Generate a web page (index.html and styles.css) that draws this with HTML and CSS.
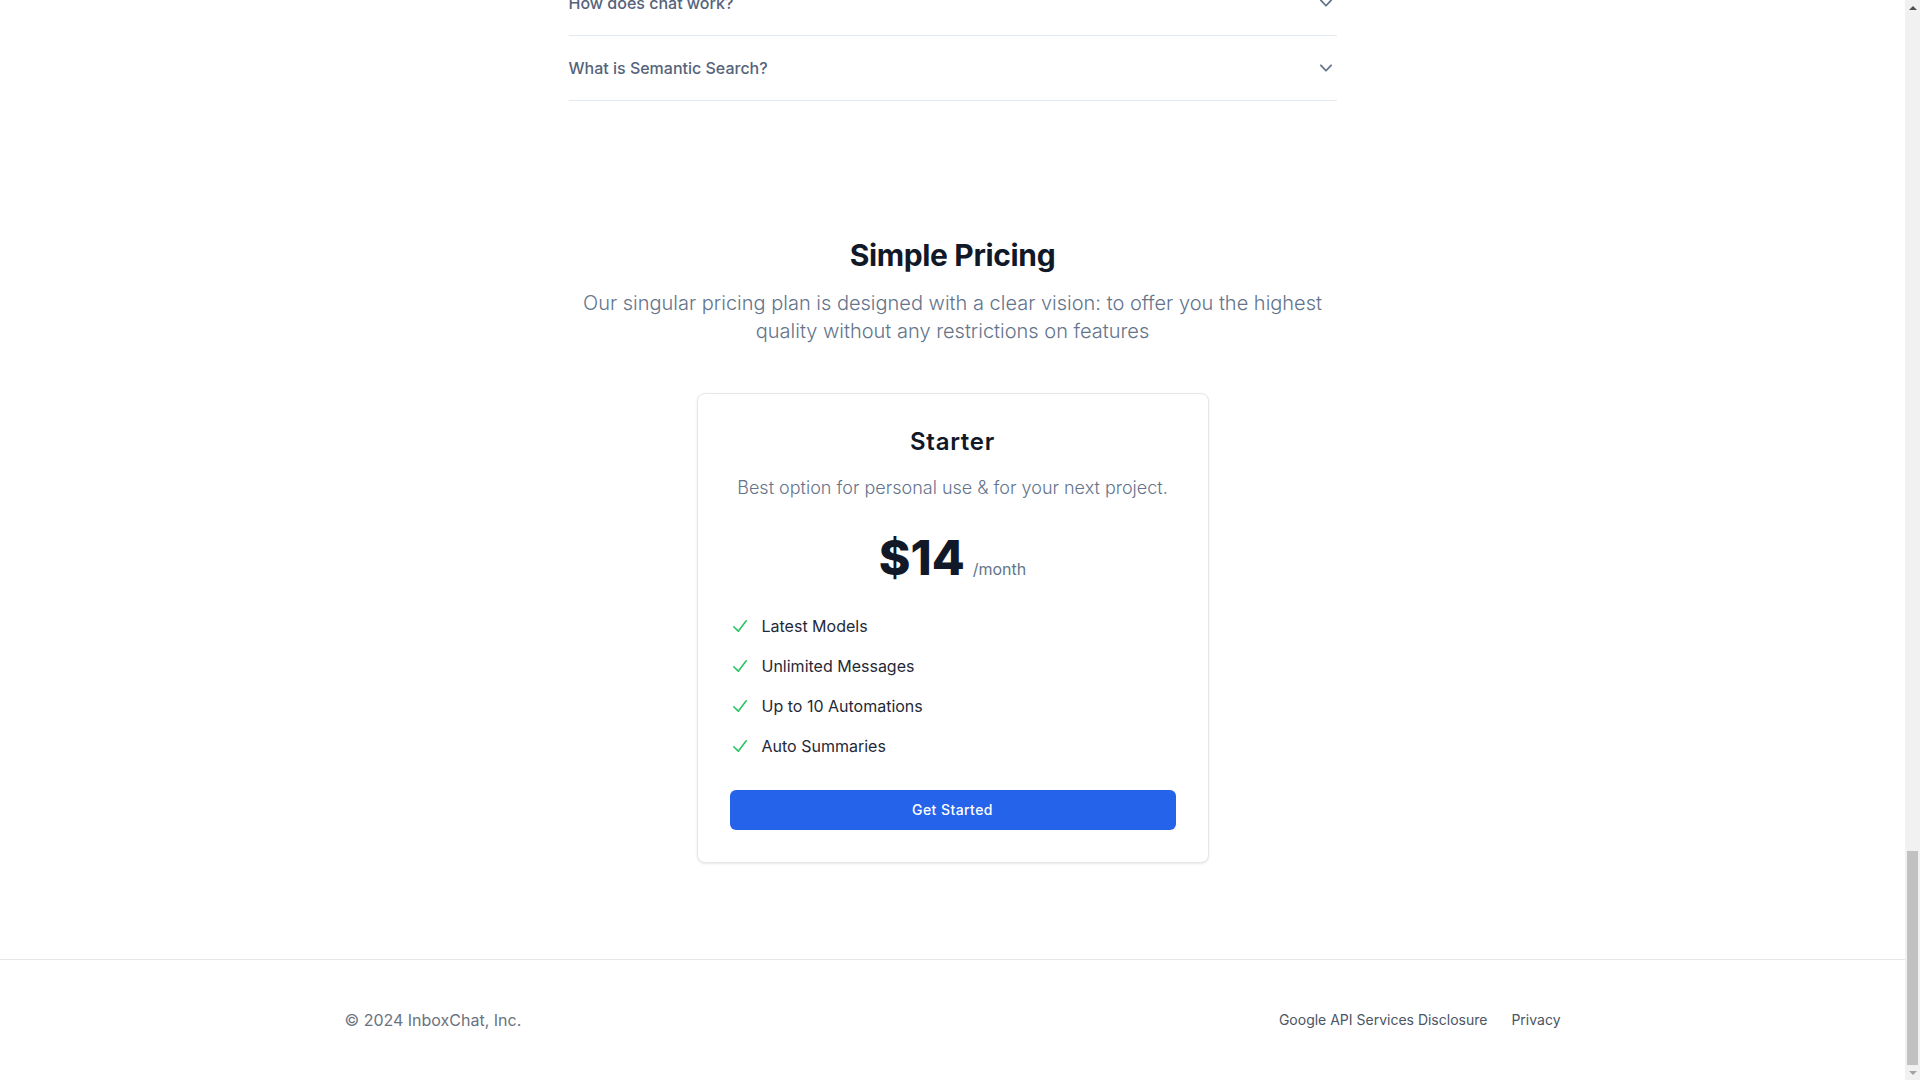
FILE: index.html
```html
<!DOCTYPE html>
<html lang="en">
<head>
<meta charset="utf-8">
<title>InboxChat</title>
<link rel="stylesheet" href="styles.css">
</head>
<body>
<div class="window">
  <div class="page">
    <main>
      <section class="faq">
        <div class="faq-inner">
          <div class="faq-list">
            <div class="faq-item">
              <button class="faq-q" type="button"><span>How does chat work?</span>
                <svg viewBox="0 0 20 20" fill="currentColor"><path fill-rule="evenodd" d="M5.23 7.21a.75.75 0 011.06.02L10 11.168l3.71-3.938a.75.75 0 111.08 1.04l-4.25 4.5a.75.75 0 01-1.08 0l-4.25-4.5a.75.75 0 01.02-1.06z" clip-rule="evenodd"/></svg>
              </button>
            </div>
            <div class="faq-item">
              <button class="faq-q" type="button"><span>What is Semantic Search?</span>
                <svg viewBox="0 0 20 20" fill="currentColor"><path fill-rule="evenodd" d="M5.23 7.21a.75.75 0 011.06.02L10 11.168l3.71-3.938a.75.75 0 111.08 1.04l-4.25 4.5a.75.75 0 01-1.08 0l-4.25-4.5a.75.75 0 01.02-1.06z" clip-rule="evenodd"/></svg>
              </button>
            </div>
          </div>
        </div>
      </section>

      <section class="pricing" id="pricing">
        <div class="pricing-head">
          <h2 class="pricing-title">Simple Pricing</h2>
          <p class="pricing-sub">Our singular pricing plan is designed with a clear vision: to offer you the highest quality without any restrictions on features</p>
        </div>
        <div class="card">
          <h3 class="plan">Starter</h3>
          <p class="plan-desc">Best option for personal use &amp; for your next project.</p>
          <div class="price"><span class="amount">$14</span><span class="per">/month</span></div>
          <ul class="features">
            <li class="feature"><svg viewBox="0 0 20 20" fill="currentColor"><path fill-rule="evenodd" d="M16.704 4.153a.75.75 0 01.143 1.052l-8 10.5a.75.75 0 01-1.127.075l-4.5-4.5a.75.75 0 011.06-1.06l3.894 3.893 7.48-9.817a.75.75 0 011.05-.143z" clip-rule="evenodd"/></svg><span>Latest Models</span></li>
            <li class="feature"><svg viewBox="0 0 20 20" fill="currentColor"><path fill-rule="evenodd" d="M16.704 4.153a.75.75 0 01.143 1.052l-8 10.5a.75.75 0 01-1.127.075l-4.5-4.5a.75.75 0 011.06-1.06l3.894 3.893 7.48-9.817a.75.75 0 011.05-.143z" clip-rule="evenodd"/></svg><span>Unlimited Messages</span></li>
            <li class="feature"><svg viewBox="0 0 20 20" fill="currentColor"><path fill-rule="evenodd" d="M16.704 4.153a.75.75 0 01.143 1.052l-8 10.5a.75.75 0 01-1.127.075l-4.5-4.5a.75.75 0 011.06-1.06l3.894 3.893 7.48-9.817a.75.75 0 011.05-.143z" clip-rule="evenodd"/></svg><span>Up to 10 Automations</span></li>
            <li class="feature"><svg viewBox="0 0 20 20" fill="currentColor"><path fill-rule="evenodd" d="M16.704 4.153a.75.75 0 01.143 1.052l-8 10.5a.75.75 0 01-1.127.075l-4.5-4.5a.75.75 0 011.06-1.06l3.894 3.893 7.48-9.817a.75.75 0 011.05-.143z" clip-rule="evenodd"/></svg><span>Auto Summaries</span></li>
          </ul>
          <a class="btn card-btn" href="#">Get Started</a>
        </div>
      </section>
    </main>

    <footer class="footer">
      <div class="footer-inner">
        <p class="copy">© 2024 InboxChat, Inc.</p>
        <nav class="links">
          <a href="#">Google API Services Disclosure</a>
          <a href="#">Privacy</a>
        </nav>
      </div>
    </footer>
  </div>

  <div class="scrollbar" aria-hidden="true">
    <div class="sb-btn"><span class="sb-up"></span></div>
    <div class="sb-track"><div class="sb-thumb"></div></div>
    <div class="sb-btn"><span class="sb-down"></span></div>
  </div>
</div>
</body>
</html>
```

FILE: styles.css
```css
* {
  box-sizing: border-box;
  margin: 0;
  padding: 0;
}

html,
body {
  height: 100%;
  overflow: hidden;
}

html {
  font-family: Inter, "Noto Sans", "Liberation Sans", sans-serif;
  color: #111827;
  background: #ffffff;
}

.window {
  display: flex;
  height: 100vh;
}

.page {
  flex: 1;
  min-width: 0;
  display: flex;
  flex-direction: column;
  justify-content: flex-end;
  overflow: hidden;
}

/* FAQ */
.faq {
  padding: 0 32px 40px;
}

.faq-inner {
  max-width: 768px;
  margin: 0 auto;
}

.faq-item {
  border-bottom: 1px solid #e2e8f0;
}

.faq-q {
  display: flex;
  justify-content: space-between;
  align-items: center;
  width: 100%;
  padding: 20px 0;
  background: none;
  border: 0;
  font-family: inherit;
  font-size: 16px;
  line-height: 24px;
  font-weight: 500;
  color: #55637a;
  text-align: left;
  cursor: pointer;
}

.faq-q svg {
  width: 24px;
  height: 24px;
  margin-right: -1px;
  color: #64748b;
  flex-shrink: 0;
}

/* Pricing */
.pricing {
  padding: 96px 32px;
}

.pricing-head {
  max-width: 768px;
  margin: 0 auto;
  text-align: center;
}

.pricing-title {
  font-size: 30px;
  line-height: 36px;
  font-weight: 700;
  letter-spacing: -0.012em;
  color: #111827;
}

.pricing-sub {
  margin-top: 16px;
  font-size: 20px;
  line-height: 28px;
  font-weight: 300;
  color: #64748b;
}

.card {
  max-width: 512px;
  margin: 48px auto 0;
  border: 1px solid #e5e7eb;
  border-radius: 8px;
  padding: 32px;
  box-shadow: 0 1px 3px rgba(0, 0, 0, 0.06), 0 1px 2px rgba(0, 0, 0, 0.04);
  text-align: center;
  background: #fff;
}

.plan {
  font-size: 24px;
  line-height: 32px;
  font-weight: 600;
  color: #111827;
  letter-spacing: 0.03em;
}

.plan-desc {
  margin-top: 16px;
  font-size: 18px;
  line-height: 28px;
  font-weight: 300;
  color: #64748b;
}

.price {
  margin-top: 32px;
  display: flex;
  justify-content: center;
  align-items: baseline;
  gap: 8px;
}

.amount {
  font-size: 48px;
  line-height: 48px;
  font-weight: 800;
  color: #111827;
}

.per {
  font-size: 16px;
  line-height: 24px;
  color: #64748b;
}

.features {
  list-style: none;
  margin-top: 32px;
  display: flex;
  flex-direction: column;
  gap: 16px;
  text-align: left;
}

.feature {
  display: flex;
  align-items: center;
  gap: 12px;
  font-size: 16px;
  line-height: 24px;
  color: #1f2937;
}

.feature svg {
  width: 20px;
  height: 20px;
  color: #22c55e;
  flex-shrink: 0;
}

.btn {
  background: #2563eb;
  color: #ffffff;
  font-size: 14px;
  line-height: 20px;
  font-weight: 500;
  text-decoration: none;
  border-radius: 6px;
  text-align: center;
  letter-spacing: 0.03em;
}

.card-btn {
  display: block;
  width: 100%;
  margin-top: 32px;
  padding: 10px 20px;
}

/* Footer */
.footer {
  border-top: 1px solid #e5e7eb;
}

.footer-inner {
  max-width: 1280px;
  margin: 0 auto;
  padding: 48px 32px;
  display: flex;
  justify-content: space-between;
  align-items: center;
}

.copy {
  font-size: 16px;
  line-height: 24px;
  color: #6b7280;
}

.links {
  display: flex;
  gap: 24px;
  font-size: 14px;
  line-height: 20px;
}

.links a {
  color: #4b5563;
  text-decoration: none;
}

/* Browser scrollbar */
.scrollbar {
  width: 15px;
  flex-shrink: 0;
  background: #f1f1f1;
  display: flex;
  flex-direction: column;
}

.sb-btn {
  height: 15px;
  display: flex;
  align-items: center;
  justify-content: center;
}

.sb-up {
  width: 0;
  height: 0;
  border-left: 4px solid transparent;
  border-right: 4px solid transparent;
  border-bottom: 4px solid #505050;
}

.sb-down {
  width: 0;
  height: 0;
  border-left: 4px solid transparent;
  border-right: 4px solid transparent;
  border-top: 4px solid #a3a3a3;
}

.sb-track {
  flex: 1;
  display: flex;
  flex-direction: column;
  justify-content: flex-end;
  padding: 0 2px;
}

.sb-thumb {
  height: 214px;
  background: #c1c1c1;
}
```
